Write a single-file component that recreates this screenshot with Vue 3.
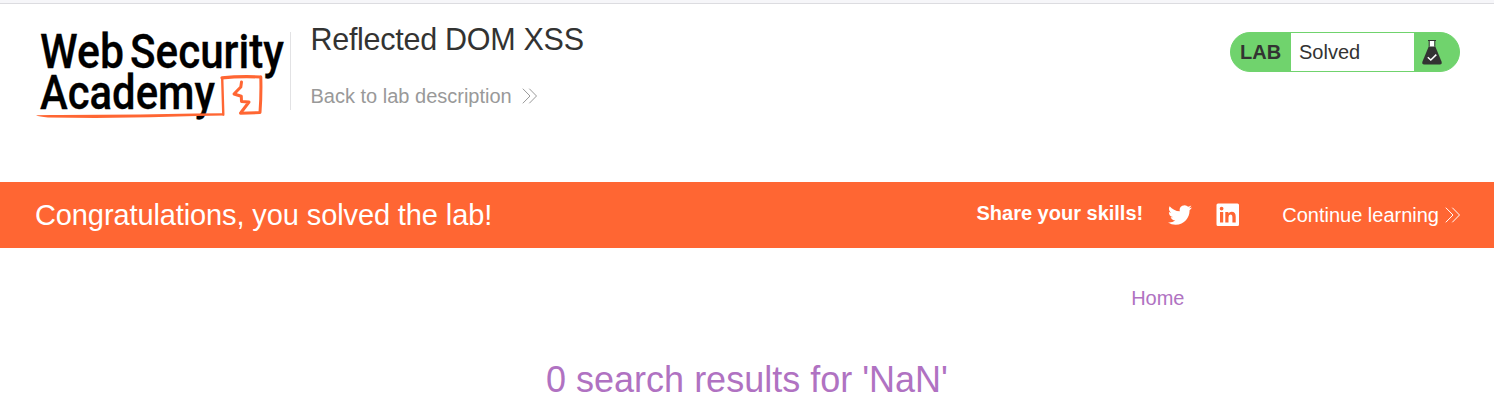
<script setup>
const title = 'Reflected DOM XSS'
const status = 'Solved'
const query = 'NaN'
</script>

<template>
  <div class="page">
    <header class="header">
      <svg class="logo" width="256" height="96" viewBox="32 26 256 96" aria-label="Web Security Academy">
        <g class="wordmark">
          <text x="40" y="68" textLength="84" lengthAdjust="spacingAndGlyphs">Web</text>
          <text x="130" y="68" textLength="154" lengthAdjust="spacingAndGlyphs">Security</text>
          <text x="40" y="108.700" textLength="175" lengthAdjust="spacingAndGlyphs">Academy</text>
        </g>
        <g class="mark">
          <path d="M36 115.300Q45 114.700 60 115L140 114.600L195 113.400L223 113.300L224.300 115.500L196 115.900L150 117.300L95 118L48 117.400Q39 116.900 36 115.300Z" />
          <path d="M223.300 114.500L222.200 78.300" stroke-width="2.400" />
          <path d="M222 77.900Q240 76 260.500 77" stroke-width="3.200" />
          <path d="M260.800 77Q261.300 95 260 112.500L240.500 113.200" stroke-width="3" />
          <path d="M241.500 82L240.800 87L234 94L241.300 96.300L241.500 101.500L249 102L241 112.500" stroke-width="3" />
        </g>
      </svg>
      <div class="title-block">
        <h2>{{ title }}</h2>
        <a class="back">
          <span>Back to lab description</span>
          <svg width="16" height="16" viewBox="0 0 16 16"><path d="M.8.7L8 8L.8 15.300M7.300.7L14.500 8L7.300 15.300" /></svg>
        </a>
      </div>
      <div class="status">
        <span class="lab">LAB</span>
        <span class="state">{{ status }}</span>
        <svg class="flask" width="22" height="26" viewBox="0 0 22 26">
          <path d="M8.500 1.500H13.500V8H8.500Z" fill="#fff" />
          <path d="M7 1.500H15M8.200 1.500V7.500M13.800 1.500V7.500" fill="none" stroke="#333332" stroke-width="1" />
          <path d="M7.700 7.500H14.300L20.500 22.500Q21.500 25.500 18.800 25.500H3.200Q.5 25.500 1.500 22.500Z" fill="#333332" />
          <path d="M6.800 18.200L9.800 21L15.300 15.600" fill="none" stroke="#fff" stroke-width="1.500" />
        </svg>
      </div>
    </header>

    <section class="banner">
      <span class="congrats">Congratulations, you solved the lab!</span>
      <span class="share">Share your skills!</span>
      <svg class="twitter" width="24" height="24" viewBox="0 0 24 24">
        <path fill="#fff" d="M23.950 4.570a10 10 0 0 1-2.820.78 4.960 4.960 0 0 0 2.160-2.730c-.95.56-2 .96-3.130 1.190a4.920 4.920 0 0 0-8.380 4.480C7.690 8.100 4.070 6.130 1.640 3.160a4.820 4.820 0 0 0-.67 2.480c0 1.710.87 3.210 2.190 4.100a4.900 4.900 0 0 1-2.230-.62v.06a4.920 4.920 0 0 0 3.950 4.830 5 5 0 0 1-2.210.08 4.940 4.940 0 0 0 4.600 3.420A9.870 9.870 0 0 1 0 19.540a13.990 13.990 0 0 0 7.550 2.210c9.050 0 14-7.500 14-13.980 0-.21 0-.42-.02-.63a9.940 9.940 0 0 0 2.420-2.570z" />
      </svg>
      <svg class="linkedin" width="24" height="24" viewBox="0 0 24 24">
        <path fill="#fff" fill-rule="evenodd" d="M2 .5H21.500Q23 .5 23 2V21.500Q23 23 21.500 23H2Q.5 23 .5 21.500V2Q.5 .5 2 .5ZM4 9V19.500H7.200V9ZM5.600 3.700A1.900 1.900 0 1 0 5.600 7.500A1.900 1.900 0 1 0 5.600 3.700ZM9.300 9V19.500H12.500V14.300Q12.500 11.600 14.500 11.600Q16.400 11.600 16.400 14.400V19.500H19.700V13.800Q19.700 8.700 15.700 8.700Q13.300 8.700 12.400 10.400V9Z" />
      </svg>
      <a class="continue">
        <span>Continue learning</span>
        <svg width="16" height="16" viewBox="0 0 16 16"><path d="M.8.7L8 8L.8 15.300M7.300.7L14.500 8L7.300 15.300" /></svg>
      </a>
    </section>

    <main>
      <nav><a>Home</a></nav>
      <h1>0 search results for '{{ query }}'</h1>
    </main>
  </div>
</template>

<style>
body { margin: 0; background: #fff; }
</style>

<style scoped>
.page {
  box-sizing: border-box;
  height: 416px;
  overflow: hidden;
  border-top: 3px solid #f6f6f9;
  font-family: "Liberation Sans", Arial, sans-serif;
  font-size: 20px;
  color: #333332;
}
.header {
  box-sizing: border-box;
  height: 179px;
  border-top: 1px solid #dcdce0;
  display: flex;
  align-items: flex-start;
  padding: 22px 34px 0 32px;
}
.logo { flex: none; overflow: visible; }
.wordmark {
  font-family: Roboto, sans-serif;
  font-weight: 500;
  font-size: 47.500px;
  fill: #000;
  stroke: #000;
  stroke-width: 0.3px;
}
.mark path { stroke: #ff6633; stroke-linecap: round; stroke-linejoin: round; fill: none; }
.mark path:first-child { stroke: none; fill: #ff6633; }
.title-block {
  box-sizing: border-box;
  height: 78px;
  margin: 6px 0 0 2px;
  padding-left: 19.500px;
  border-left: 1px solid #e2e2e4;
}
h2 {
  margin: -11px 0 0;
  font-size: 30.500px;
  line-height: 36px;
  font-weight: 400;
  letter-spacing: -0.28px;
  white-space: nowrap;
}
.back {
  display: flex;
  align-items: center;
  gap: 10px;
  margin-top: 27px;
  line-height: 24px;
  color: #999;
  white-space: nowrap;
}
.back svg path, .continue svg path { fill: none; stroke: currentColor; stroke-width: 1; }
.status {
  box-sizing: border-box;
  width: 230px;
  height: 40px;
  margin: 6px 0 0 auto;
  display: flex;
  align-items: center;
  border: 1px solid #70d36d;
  border-radius: 20px;
  background: #70d36d;
  line-height: 38px;
}
.lab { width: 51px; padding-left: 9px; font-weight: 700; }
.state { width: 115px; padding-left: 8px; background: #fff; }
.flask { margin-left: 7px; }
.banner {
  height: 66px;
  display: flex;
  align-items: center;
  padding: 0 33px 0 35px;
  background: #ff6633;
  color: #fff;
  white-space: nowrap;
}
.congrats { font-size: 29px; letter-spacing: -0.11px; }
.share { margin: -4px 0 0 auto; font-weight: 700; }
.twitter { margin-left: 25px; }
.linkedin { margin-left: 24px; }
.continue { display: flex; align-items: center; gap: 6px; margin-left: 42px; }
nav { padding: 38px 309.500px 0 0; line-height: 24px; text-align: right; color: #b072c2; }
h1 {
  margin: 46px 0 0;
  text-align: center;
  font-size: 36px;
  line-height: 48px;
  font-weight: 400;
  color: #b072c2;
}
</style>
